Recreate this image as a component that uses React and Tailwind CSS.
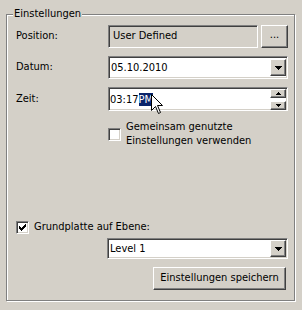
import React from "react";

const font = { fontFamily: '"DejaVu Sans Condensed", "Liberation Sans", Arial, sans-serif' };

// classic win2k 3D borders
const sunken =
  "border border-t-[#808080] border-l-[#808080] border-b-white border-r-white shadow-[inset_1px_1px_0_#404040,inset_-1px_-1px_0_#d4d0c8]";
const raised =
  "border border-t-white border-l-white border-b-[#404040] border-r-[#404040] shadow-[inset_-1px_-1px_0_#808080,inset_1px_1px_0_#d4d0c8]";

const Arrow = () => (
  <svg width="7" height="4" viewBox="0 0 7 4" className="block">
    <path d="M0 0h7v1H6v1H5v1H4v1H3V3H2V2H1V1H0z" fill="#000" />
  </svg>
);

const SmallArrow = ({ up }) => (
  <svg width="5" height="3" viewBox="0 0 5 3" className="block">
    {up ? <path d="M2 0h1v1h1v1h1v1H0V2h1V1h1z" fill="#000" /> : <path d="M0 0h5v1H4v1H3v1H2V2H1V1H0z" fill="#000" />}
  </svg>
);

const Combo = ({ value, className = "" }) => (
  <div className={`flex items-center bg-white ${sunken} ${className}`}>
    <span className="flex-1 pl-[2px] leading-none text-black">{value}</span>
    <div className={`mr-[1px] flex h-[17px] w-[16px] items-center justify-center bg-[#d4d0c8] ${raised}`}>
      <Arrow />
    </div>
  </div>
);

const Checkbox = ({ checked }) => (
  <div className={`h-[13px] w-[13px] shrink-0 bg-white ${sunken} flex items-center justify-center`}>
    {checked && (
      <svg width="7" height="7" viewBox="0 0 7 7" className="block" shapeRendering="crispEdges">
        <path d="M6 0h1v3H6zM5 1h1v3H5zM4 2h1v3H4zM0 2h1v3H0zM1 3h1v3H1zM2 4h1v3H2zM3 3h1v3H3z" fill="#000" />
      </svg>
    )}
  </div>
);

export default function App() {
  return (
    <div className="h-[310px] w-[302px] bg-[#d4d0c8] pl-[6px] pt-[14px] text-[11px] text-black" style={font}>
      <div className="relative h-[287px] w-[289px] border border-[#808080] shadow-[inset_1px_1px_0_#fff,1px_1px_0_#fff]">
        <span className="absolute -top-[8px] left-[6px] bg-[#d4d0c8] px-[1px] leading-[14px]">Einstellungen</span>

        <div className="flex flex-col pl-[9px] pt-[10px]">
          <div className="flex h-[23px] items-center">
            <span className="w-[92px]">Position:</span>
            <div className={`flex h-[23px] w-[150px] items-center bg-[#d4d0c8] pl-[4px] ${sunken}`}>User Defined</div>
            <div className={`ml-[3px] flex h-[23px] w-[27px] items-center justify-center bg-[#d4d0c8] pb-[2px] ${raised}`}>...</div>
          </div>

          <div className="mt-[8px] flex h-[23px] items-center">
            <span className="w-[92px]">Datum:</span>
            <Combo value="05.10.2010" className="h-[23px] w-[180px]" />
          </div>

          <div className="mt-[8px] flex h-[24px] items-center">
            <span className="w-[92px]">Zeit:</span>
            <div className={`relative flex h-[24px] w-[180px] items-center bg-white ${sunken}`}>
              <span className="flex-1 pl-[1px] leading-none">
                03:17<span className="bg-[#0a246a] text-white">PM</span>
              </span>
              <div className="mr-[1px] flex flex-col gap-[3px]">
                <div className={`flex h-[9px] w-[16px] items-center justify-center bg-[#d4d0c8] ${raised}`}>
                  <SmallArrow up />
                </div>
                <div className={`flex h-[9px] w-[16px] items-center justify-center bg-[#d4d0c8] ${raised}`}>
                  <SmallArrow />
                </div>
              </div>
              <svg width="12" height="20" viewBox="0 0 12 20" className="absolute left-[42px] top-[6px]">
                <path d="M0.5 0.5V16.5L4.5 12.5L7.5 19.5L9.5 18.5L6.5 11.5H11.5Z" fill="#fff" stroke="#000" strokeWidth="1" />
              </svg>
            </div>
          </div>

          <div className="mt-[9px] flex items-center pl-[92px]">
            <Checkbox />
            <span className="ml-[5px] leading-[14px]">
              Gemeinsam genutzte
              <br />
              Einstellungen verwenden
            </span>
          </div>

          <div className="mt-[72px] flex items-center">
            <Checkbox checked />
            <span className="ml-[5px] leading-[14px]">Grundplatte auf Ebene:</span>
          </div>

          <div className="mt-[4px] pl-[91px]">
            <Combo value="Level 1" className="h-[21px] w-[181px]" />
          </div>

          <div className="mt-[8px] flex justify-end pr-[8px]">
            <div className={`flex h-[23px] w-[133px] items-center justify-center bg-[#d4d0c8] ${raised}`}>
              Einstellungen speichern
            </div>
          </div>
        </div>
      </div>
    </div>
  );
}
